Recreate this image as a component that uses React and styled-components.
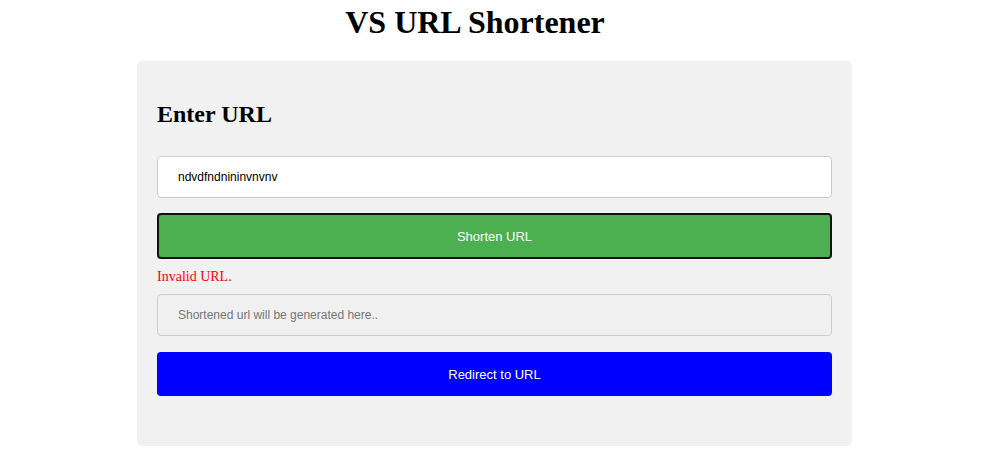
import React from 'react';
import styled, { createGlobalStyle } from 'styled-components';

const GlobalStyle = createGlobalStyle`
	body {
		margin: 0;
		background: #fff;
		font-family: 'Liberation Serif', 'Times New Roman', serif;
	}
`;

const Page = styled.main`
	display: flex;
	flex-direction: column;
	padding-top: 4px;
`;

const Title = styled.h1`
	margin: 0 50px 0 0;
	font-size: 32px;
	font-weight: 700;
	line-height: 37px;
	text-align: center;
	color: #000;
`;

const Card = styled.section`
	width: 715px;
	box-sizing: border-box;
	margin: 20px 0 0 137px;
	padding: 18px 20px 50px;
	background: #f1f1f1;
	border-radius: 5px;
	display: flex;
	flex-direction: column;
`;

const Heading = styled.h2`
	margin: 21px 0 28px;
	font-size: 24px;
	line-height: 28px;
	font-weight: 700;
	color: #000;
`;

const Field = styled.input`
	height: 42px;
	box-sizing: border-box;
	padding: 0 20px;
	border: 1px solid #ccc;
	border-radius: 4px;
	background: ${(p) => (p.readOnly ? '#f0f0f0' : '#fff')};
	font-family: 'Liberation Sans', Arial, sans-serif;
	font-size: 12px;
	color: #000;
	outline: none;

	&::placeholder {
		color: #777;
	}
`;

const Button = styled.button`
	height: ${(p) => p.$h}px;
	margin-top: ${(p) => p.$mt}px;
	box-sizing: border-box;
	border: ${(p) => (p.$focused ? '2px solid #111' : 'none')};
	border-radius: 4px;
	background: ${(p) => p.$bg};
	color: #fff;
	font-family: 'Liberation Sans', Arial, sans-serif;
	font-size: 13px;
	cursor: pointer;
`;

const Error = styled.p`
	margin: 10px 0 9px;
	font-size: 14px;
	line-height: 16px;
	color: #f00;
`;

const App = () => (
	<>
		<GlobalStyle />
		<Page>
			<Title>VS URL Shortener</Title>
			<Card>
				<Heading>Enter URL</Heading>
				<Field type='text' defaultValue='ndvdfndnininvnvnv' />
				<Button $bg='#4caf50' $h={46} $mt={15} $focused>
					Shorten URL
				</Button>
				<Error>Invalid URL.</Error>
				<Field readOnly placeholder='Shortened url will be generated here..' />
				<Button $bg='#0000ff' $h={44} $mt={16}>
					Redirect to URL
				</Button>
			</Card>
		</Page>
	</>
);

export default App;
